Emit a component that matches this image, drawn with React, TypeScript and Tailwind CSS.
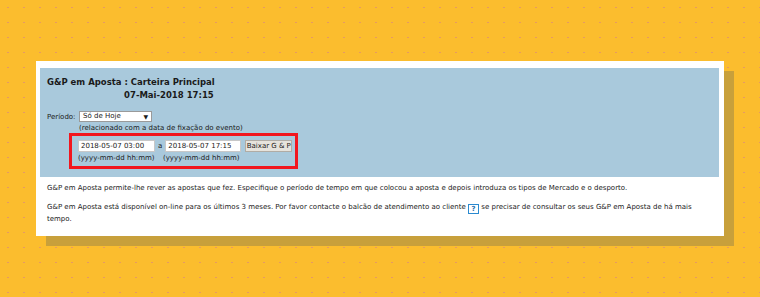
import React from 'react';

const font = { fontFamily: '"DejaVu Sans", Verdana, sans-serif' };

export default function App() {
  return (
    <div
      className="w-[760px] h-[297px] overflow-hidden bg-[#FBBD2E] bg-[radial-gradient(#e69a62_0.5px,transparent_1px)] bg-[size:16px_15px] pt-[61px] pl-[36px]"
      style={font}
    >
      <div className="w-[688px] h-[175px] bg-white shadow-[10px_10px_0_#C8A03B] pt-[7px] pl-[4px]">
        {/* top panel */}
        <div className="w-[679px] h-[109px] bg-[#A9C9DC] pl-[7px] pt-[8px] text-[#1a1a1a] text-[7px] leading-none">
          <div className="flex flex-col items-end w-fit font-bold text-[8.5px] leading-[13px]">
            <div>G&amp;P em Aposta : Carteira Principal</div>
            <div className="pr-[1px]">07-Mai-2018 17:15</div>
          </div>

          <div className="mt-[9px] flex items-start">
            <span className="w-[32px] leading-[10px] pt-[1px]">Período:</span>
            <div>
              <div className="w-[73px] h-[11px] bg-white border border-[#9a9a9a] flex items-center justify-between px-[3px]">
                <span>Só de Hoje</span>
                <span className="text-[6px]">▼</span>
              </div>
              <div className="leading-[10px] mt-[1px]">(relacionado com a data de fixação do evento)</div>
            </div>
          </div>

          <div className="ml-[22px] w-[229px] h-[36px] border-[3px] border-[#F2161E] pt-[4px] pl-[6px]">
            <div className="flex items-center">
              <div className="w-[77px] h-[12px] bg-white border border-[#c8c8c8] flex items-center px-[2px] whitespace-nowrap">
                2018-05-07 03:00
              </div>
              <span className="mx-[3px]">a</span>
              <div className="w-[76px] h-[12px] bg-white border border-[#c8c8c8] flex items-center px-[2px] whitespace-nowrap">
                2018-05-07 17:15
              </div>
              <div className="ml-[4px] w-[47px] h-[12px] bg-[#E6E3DC] border border-[#b0aca5] flex items-center justify-center whitespace-nowrap">
                Baixar G &amp; P
              </div>
            </div>
            <div className="flex leading-[10px] mt-[1px]">
              <span className="w-[85px]">(yyyy-mm-dd hh:mm)</span>
              <span>(yyyy-mm-dd hh:mm)</span>
            </div>
          </div>
        </div>

        {/* text */}
        <div className="pl-[7px] pr-[10px] text-[7px] text-[#1a1a1a] leading-[11px]">
          <p className="mt-[6px]">
            G&amp;P em Aposta permite-lhe rever as apostas que fez. Especifique o período de tempo em que colocou a aposta e depois introduza os tipos de Mercado e o desporto.
          </p>
          <p className="mt-[8px]">
            G&amp;P em Aposta está disponível on-line para os últimos 3 meses. Por favor contacte o balcão de atendimento ao cliente{' '}
            <span className="inline-block w-[11px] h-[10px] border border-[#2a8ad0] bg-white text-[#1f6fb0] font-bold text-[7px] leading-[8px] text-center align-[-2px]">
              ?
            </span>{' '}
            se precisar de consultar os seus G&amp;P em Aposta de há mais tempo.
          </p>
        </div>
      </div>
    </div>
  );
}
